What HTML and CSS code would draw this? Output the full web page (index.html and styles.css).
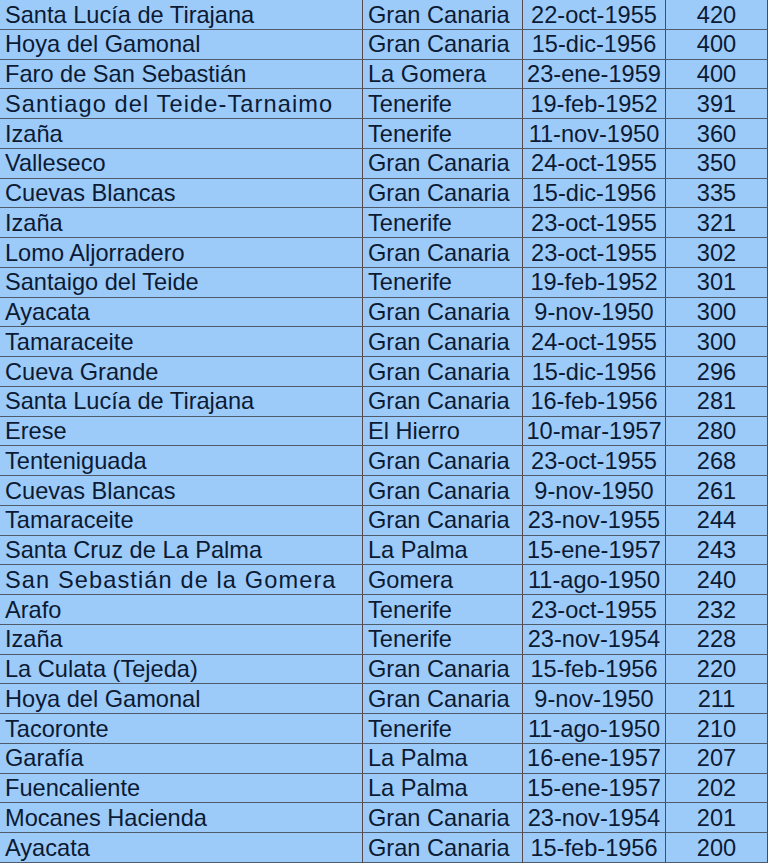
FILE: index.html
```html
<!DOCTYPE html>
<html lang="es">
<head>
<meta charset="utf-8">
<title>Tabla</title>
<link rel="stylesheet" href="styles.css">
</head>
<body>
<div class="grid">
<div class="c name">Santa Lucía de Tirajana</div><div class="c isl">Gran Canaria</div><div class="c date">22-oct-1955</div><div class="c val">420</div>
<div class="c name">Hoya del Gamonal</div><div class="c isl">Gran Canaria</div><div class="c date">15-dic-1956</div><div class="c val">400</div>
<div class="c name">Faro de San Sebastián</div><div class="c isl">La Gomera</div><div class="c date">23-ene-1959</div><div class="c val">400</div>
<div class="c name wide">Santiago del Teide-Tarnaimo</div><div class="c isl">Tenerife</div><div class="c date">19-feb-1952</div><div class="c val">391</div>
<div class="c name">Izaña</div><div class="c isl">Tenerife</div><div class="c date">11-nov-1950</div><div class="c val">360</div>
<div class="c name">Valleseco</div><div class="c isl">Gran Canaria</div><div class="c date">24-oct-1955</div><div class="c val">350</div>
<div class="c name">Cuevas Blancas</div><div class="c isl">Gran Canaria</div><div class="c date">15-dic-1956</div><div class="c val">335</div>
<div class="c name">Izaña</div><div class="c isl">Tenerife</div><div class="c date">23-oct-1955</div><div class="c val">321</div>
<div class="c name">Lomo Aljorradero</div><div class="c isl">Gran Canaria</div><div class="c date">23-oct-1955</div><div class="c val">302</div>
<div class="c name">Santaigo del Teide</div><div class="c isl">Tenerife</div><div class="c date">19-feb-1952</div><div class="c val">301</div>
<div class="c name">Ayacata</div><div class="c isl">Gran Canaria</div><div class="c date">9-nov-1950</div><div class="c val">300</div>
<div class="c name">Tamaraceite</div><div class="c isl">Gran Canaria</div><div class="c date">24-oct-1955</div><div class="c val">300</div>
<div class="c name">Cueva Grande</div><div class="c isl">Gran Canaria</div><div class="c date">15-dic-1956</div><div class="c val">296</div>
<div class="c name">Santa Lucía de Tirajana</div><div class="c isl">Gran Canaria</div><div class="c date">16-feb-1956</div><div class="c val">281</div>
<div class="c name">Erese</div><div class="c isl">El Hierro</div><div class="c date">10-mar-1957</div><div class="c val">280</div>
<div class="c name">Tenteniguada</div><div class="c isl">Gran Canaria</div><div class="c date">23-oct-1955</div><div class="c val">268</div>
<div class="c name">Cuevas Blancas</div><div class="c isl">Gran Canaria</div><div class="c date">9-nov-1950</div><div class="c val">261</div>
<div class="c name">Tamaraceite</div><div class="c isl">Gran Canaria</div><div class="c date">23-nov-1955</div><div class="c val">244</div>
<div class="c name">Santa Cruz de La Palma</div><div class="c isl">La Palma</div><div class="c date">15-ene-1957</div><div class="c val">243</div>
<div class="c name wide">San Sebastián de la Gomera</div><div class="c isl">Gomera</div><div class="c date">11-ago-1950</div><div class="c val">240</div>
<div class="c name">Arafo</div><div class="c isl">Tenerife</div><div class="c date">23-oct-1955</div><div class="c val">232</div>
<div class="c name">Izaña</div><div class="c isl">Tenerife</div><div class="c date">23-nov-1954</div><div class="c val">228</div>
<div class="c name">La Culata (Tejeda)</div><div class="c isl">Gran Canaria</div><div class="c date">15-feb-1956</div><div class="c val">220</div>
<div class="c name">Hoya del Gamonal</div><div class="c isl">Gran Canaria</div><div class="c date">9-nov-1950</div><div class="c val">211</div>
<div class="c name">Tacoronte</div><div class="c isl">Tenerife</div><div class="c date">11-ago-1950</div><div class="c val">210</div>
<div class="c name">Garafía</div><div class="c isl">La Palma</div><div class="c date">16-ene-1957</div><div class="c val">207</div>
<div class="c name">Fuencaliente</div><div class="c isl">La Palma</div><div class="c date">15-ene-1957</div><div class="c val">202</div>
<div class="c name">Mocanes Hacienda</div><div class="c isl">Gran Canaria</div><div class="c date">23-nov-1954</div><div class="c val">201</div>
<div class="c name">Ayacata</div><div class="c isl">Gran Canaria</div><div class="c date">15-feb-1956</div><div class="c val">200</div>
</div>
</body>
</html>
```
FILE: styles.css
```css
html, body {
  margin: 0;
  padding: 0;
  background: #ffffff;
}
body {
  width: 768px;
  height: 864px;
  overflow: hidden;
}
.grid {
  display: grid;
  grid-template-columns: 363px 160px 143px 102px;
  grid-auto-rows: 29.75px;
  background: #9ccbfa;
  font-family: "Liberation Sans", Arial, sans-serif;
  font-size: 23.6px;
  color: #0d1a33;
}
.c {
  box-sizing: border-box;
  border-bottom: 1px solid #4f5a6a;
  border-right: 1px solid #5a4848;
  display: flex;
  align-items: center;
  white-space: nowrap;
  overflow: hidden;
  line-height: 1;
  padding-top: 2px;
}
.name, .isl {
  padding-left: 5px;
}
.wide {
  letter-spacing: 1.1px;
}
.date, .val {
  justify-content: center;
}
```
